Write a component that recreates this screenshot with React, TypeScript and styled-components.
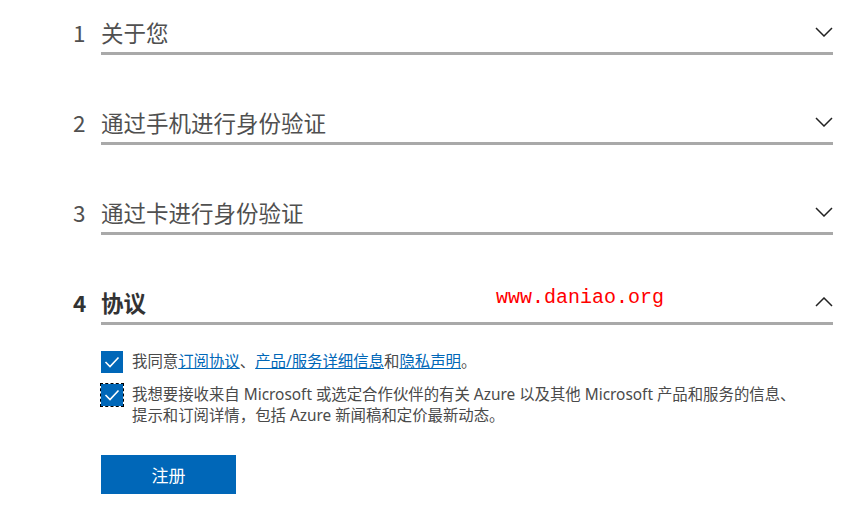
import React from "react";
import styled, { createGlobalStyle } from "styled-components";

const GlobalStyle = createGlobalStyle`
  html, body { margin: 0; padding: 0; background: #ffffff; }
  body { font-family: "Noto Sans CJK SC", "Noto Sans", sans-serif; }
`;

const Page = styled.div`
  width: 855px;
  height: 528px;
  padding: 12px 22px 0 73px;
  box-sizing: border-box;
  overflow: hidden;
  position: relative;
`;

const Section = styled.section`
  display: grid;
  grid-template-columns: 28px 1fr;
  margin-bottom: 47px;
`;

const Num = styled.div<{ $bold?: boolean }>`
  height: 40px;
  display: flex;
  align-items: center;
  font-size: 22.5px;
  color: ${(p) => (p.$bold ? "#333333" : "#505050")};
  font-weight: ${(p) => (p.$bold ? 700 : 400)};
`;

const Body = styled.div``;

const HeaderRow = styled.div`
  height: 40px;
  display: flex;
  align-items: center;
  justify-content: space-between;
  border-bottom: 3px solid #a9a9a9;
`;

const Title = styled.h2<{ $bold?: boolean }>`
  margin: 0;
  font-size: 22.5px;
  line-height: 40px;
  font-weight: ${(p) => (p.$bold ? 700 : 400)};
  color: ${(p) => (p.$bold ? "#333333" : "#505050")};
`;

const Watermark = styled.span`
  font-family: "Liberation Mono", monospace;
  font-size: 20px;
  color: #ff0000;
  margin-left: auto;
  margin-right: 151px;
  margin-top: -9px;
`;

const Chevron = styled.svg`
  width: 18px;
  height: 10px;
  flex: none;
`;

const Agreement = styled.div`
  padding-top: 26px;
  display: flex;
  flex-direction: column;
  gap: 11px;
`;

const CheckRow = styled.label`
  display: flex;
  align-items: flex-start;
  gap: 9px;
  font-family: "Noto Sans", "Noto Sans CJK SC", sans-serif;
  font-size: 15.4px;
  line-height: 21px;
  color: #4a4a4a;
  max-width: 700px;
`;

const Box = styled.span<{ $focus?: boolean }>`
  flex: none;
  width: 22px;
  height: 22px;
  background: #0067b8;
  display: flex;
  align-items: center;
  justify-content: center;
  outline: ${(p) => (p.$focus ? "1px dashed #000" : "none")};
  box-sizing: border-box;
`;

const Text = styled.span``;

const Link = styled.a`
  color: #0067b8;
  text-decoration: underline;
`;

const Button = styled.button`
  margin-top: 29px;
  width: 135px;
  height: 39px;
  background: #0067b8;
  border: none;
  color: #ffffff;
  font-family: "Noto Sans CJK SC", sans-serif;
  font-size: 17px;
  cursor: pointer;
`;

const Down = () => (
  <Chevron viewBox="0 0 18 10">
    <path d="M1 1 L9 9 L17 1" fill="none" stroke="#222" strokeWidth="1.5" />
  </Chevron>
);

const Up = () => (
  <Chevron viewBox="0 0 18 10">
    <path d="M1 9 L9 1 L17 9" fill="none" stroke="#222" strokeWidth="1.5" />
  </Chevron>
);

const Check = () => (
  <svg width="16" height="12" viewBox="0 0 16 12">
    <path d="M1.5 6 L6 10.5 L14.5 1.5" fill="none" stroke="#fff" strokeWidth="1.6" />
  </svg>
);

const steps = ["关于您", "通过手机进行身份验证", "通过卡进行身份验证"];

export default function App() {
  return (
    <>
      <GlobalStyle />
      <Page>
        {steps.map((s, i) => (
          <Section key={s}>
            <Num>{i + 1}</Num>
            <Body>
              <HeaderRow>
                <Title>{s}</Title>
                <Down />
              </HeaderRow>
            </Body>
          </Section>
        ))}
        <Section>
          <Num $bold>4</Num>
          <Body>
            <HeaderRow>
              <Title $bold>协议</Title>
              <Watermark>www.daniao.org</Watermark>
              <Up />
            </HeaderRow>
            <Agreement>
              <CheckRow>
                <Box>
                  <Check />
                </Box>
                <Text>
                  我同意<Link>订阅协议</Link>、<Link>产品/服务详细信息</Link>和<Link>隐私声明</Link>。
                </Text>
              </CheckRow>
              <CheckRow>
                <Box $focus>
                  <Check />
                </Box>
                <Text>
                  我想要接收来自 Microsoft 或选定合作伙伴的有关 Azure 以及其他 Microsoft 产品和服务的信息、提示和订阅详情，包括 Azure 新闻稿和定价最新动态。
                </Text>
              </CheckRow>
            </Agreement>
            <Button>注册</Button>
          </Body>
        </Section>
      </Page>
    </>
  );
}
